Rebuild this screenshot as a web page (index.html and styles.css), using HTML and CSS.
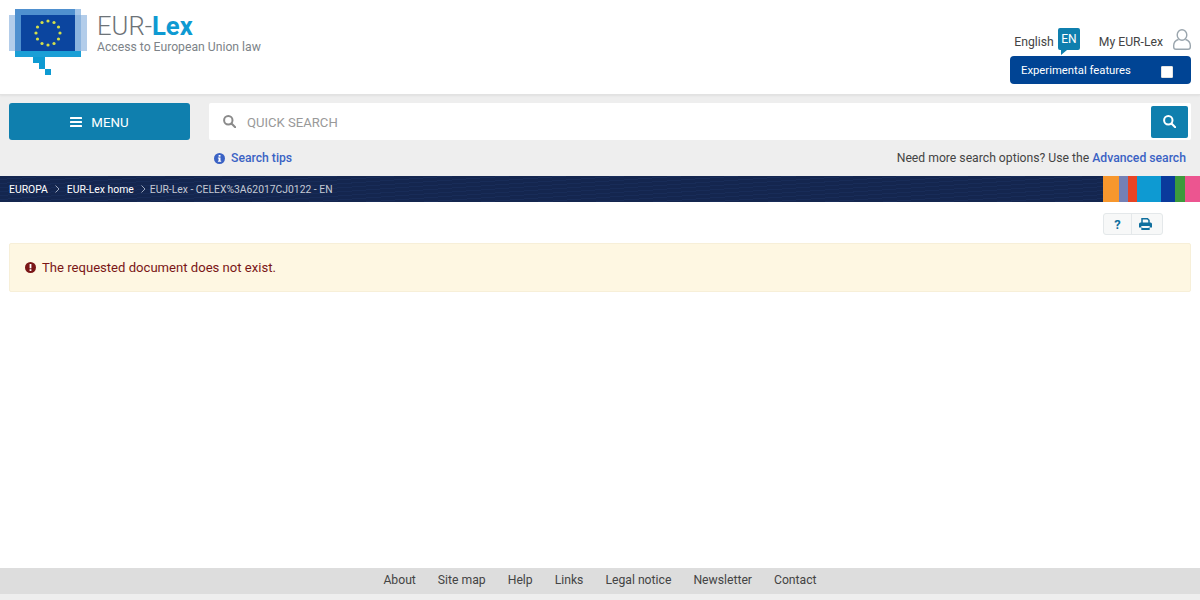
FILE: index.html
```html
<!DOCTYPE html>
<html lang="en">
<head>
<meta charset="utf-8">
<title>EUR-Lex</title>
<link rel="stylesheet" href="styles.css">
</head>
<body>
<div class="page">
  <header class="header">
    <div class="brand">
      <svg class="logo" width="78" height="66" viewBox="0 0 78 66">
        <rect x="0" y="6" width="78" height="36" fill="#b3cdea"/>
        <rect x="66" y="0" width="6" height="42" fill="#a5c6e8"/>
        <rect x="6" y="0" width="60" height="6" fill="#4f90cf"/>
        <rect x="6" y="6" width="6" height="36" fill="#4f90cf"/>
        <rect x="66" y="6" width="6" height="36" fill="#8cb4de"/>
        <rect x="12" y="6" width="54" height="36" fill="#0b459f"/>
        <rect x="6" y="42" width="66" height="6" fill="#1a9fd6"/>
        <rect x="24" y="48" width="12" height="6" fill="#0e9ad2"/>
        <rect x="30" y="54" width="6" height="6" fill="#0e9ad2"/>
        <rect x="36" y="60" width="6" height="6" fill="#0e9ad2"/>
        <g fill="#d4e04a">
          <circle cx="39" cy="12" r="1.600"/><circle cx="45" cy="13.500" r="1.600"/><circle cx="49.500" cy="18" r="1.600"/>
          <circle cx="51" cy="24" r="1.600"/><circle cx="49.500" cy="30" r="1.600"/><circle cx="45" cy="34.500" r="1.600"/>
          <circle cx="39" cy="36" r="1.600"/><circle cx="33" cy="34.500" r="1.600"/><circle cx="28.500" cy="30" r="1.600"/>
          <circle cx="27" cy="24" r="1.600"/><circle cx="28.500" cy="18" r="1.600"/><circle cx="33" cy="13.500" r="1.600"/>
        </g>
      </svg>
      <div class="brand-text">
        <div class="brand-name">EUR-<b>Lex</b></div>
        <div class="brand-tag">Access to European Union law</div>
      </div>
    </div>
    <div class="tools">
      <div class="tools-row">
        <span class="tool-label">English</span>
        <svg class="lang" width="22" height="27" viewBox="0 0 22 27">
          <path d="M2 0h18a2 2 0 0 1 2 2v18a2 2 0 0 1-2 2H9l-6 5v-5H2a2 2 0 0 1-2-2V2a2 2 0 0 1 2-2z" fill="#0f7fae"/>
          <text x="11" y="14.500" text-anchor="middle" class="lang-text">EN</text>
        </svg>
        <span class="tool-label my">My EUR-Lex</span>
        <svg class="user" width="18" height="21" viewBox="0 0 18 21" fill="none" stroke="#9aa5ad" stroke-width="1.400">
          <ellipse cx="9" cy="6" rx="4.800" ry="5.200"/>
          <path d="M5.500 10.500C2.500 11.500.7 13.500.7 16.500v1.500a2.300 2.300 0 0 0 2.300 2.300h12a2.300 2.300 0 0 0 2.300-2.300v-1.500c0-3-1.800-5-4.800-6"/>
        </svg>
      </div>
      <div class="experimental">
        <span>Experimental features</span>
        <span class="checkbox"></span>
      </div>
    </div>
  </header>

  <section class="searchband">
    <div class="search-row">
      <button class="menu-btn">
        <svg width="12" height="10" viewBox="0 0 12 10" fill="#fff"><rect width="12" height="2" rx=".5"/><rect y="4" width="12" height="2" rx=".5"/><rect y="8" width="12" height="2" rx=".5"/></svg>
        <span>MENU</span>
      </button>
      <div class="search-box">
        <svg class="search-ico" width="13" height="13" viewBox="0 0 13 13" fill="none" stroke="#8a8a8a" stroke-width="2"><circle cx="5.300" cy="5.300" r="4.200"/><path d="M8.500 8.500l3.700 3.700" stroke-linecap="round"/></svg>
        <span class="placeholder">QUICK SEARCH</span>
        <button class="search-btn">
          <svg width="13" height="13" viewBox="0 0 13 13" fill="none" stroke="#fff" stroke-width="2"><circle cx="5.300" cy="5.300" r="4.200"/><path d="M8.500 8.500l3.700 3.700" stroke-linecap="round"/></svg>
        </button>
      </div>
    </div>
    <div class="links-row">
      <a class="tips">
        <svg width="11" height="11" viewBox="0 0 11 11"><circle cx="5.500" cy="5.500" r="5.500" fill="#3a62c4"/><rect x="4.600" y="2" width="1.900" height="1.700" fill="#fff"/><path d="M3.900 4.500h2.600v3.200h.7v1H3.900v-1h.7V5.500h-.7z" fill="#fff"/></svg>
        Search tips
      </a>
      <span class="more">Need more search options? Use the <a>Advanced search</a></span>
    </div>
  </section>

  <nav class="crumbs">
    <div class="crumb-list">
      <a>EUROPA</a>
      <svg class="sep" width="5" height="8" viewBox="0 0 5 8" fill="none" stroke="#9aa5bb"><path d="M.5.500l3.500 3.500-3.500 3.500"/></svg>
      <a>EUR-Lex home</a>
      <svg class="sep sep-last" width="5" height="8" viewBox="0 0 5 8" fill="none" stroke="#9aa5bb"><path d="M.5.500l3.500 3.500-3.500 3.500"/></svg>
      <span class="current">EUR-Lex - CELEX%3A62017CJ0122 - EN</span>
    </div>
    <div class="stripes">
      <i class="s1"></i><i class="s2"></i><i class="s3"></i><i class="s4"></i><i class="s5"></i><i class="s6"></i><i class="s7"></i>
    </div>
  </nav>

  <main class="main">
    <div class="actions">
      <div class="action-group">
        <span class="action q">?</span>
        <span class="action p">
          <svg width="13" height="12" viewBox="0 0 13 12"><path d="M3 5V.8h5.500L10 2.300V5" fill="none" stroke="#0f6f9e" stroke-width="1.500"/><path d="M1.500 4.500h10A1.500 1.500 0 0 1 13 6v3.500h-2.300V8H2.300v1.500H0V6a1.500 1.500 0 0 1 1.500-1.500z" fill="#0f6f9e"/><path d="M3 9h7v3H3z" fill="none"/><path d="M2.300 9.500h8.400v2.500H2.300z" fill="#0f6f9e"/><path d="M3.300 8.800h6.400v1.200H3.300z" fill="#f7f8f8"/></svg>
        </span>
      </div>
    </div>
    <div class="alert">
      <svg width="11" height="11" viewBox="0 0 11 11"><circle cx="5.500" cy="5.500" r="5.500" fill="#7a1616"/><rect x="4.600" y="2" width="1.800" height="4.300" fill="#fff"/><rect x="4.600" y="7.200" width="1.800" height="1.800" fill="#fff"/></svg>
      <span>The requested document does not exist.</span>
    </div>
  </main>

  <footer class="footer">
    <a>About</a><a>Site map</a><a>Help</a><a>Links</a><a>Legal notice</a><a>Newsletter</a><a>Contact</a>
  </footer>
  <div class="footer-tail"></div>
</div>
</body>
</html>
```
FILE: styles.css
```css
* { box-sizing: border-box; }
html, body { margin: 0; padding: 0; }
body { font-family: Roboto, "Liberation Sans", sans-serif; color: #333; background: #fff; }
.page { width: 1200px; height: 600px; display: flex; flex-direction: column; overflow: hidden; }

.header { height: 95px; padding: 9px 9px 0; display: flex; justify-content: space-between; border-bottom: 1px solid #e2e2e2; box-shadow: 0 1px 2px rgba(0,0,0,.06); position: relative; }
.brand { display: flex; gap: 10px; align-items: flex-start; }
.logo { display: block; }
.brand-text { padding-top: 4px; }
.brand-name { font-size: 25.600px; line-height: 27px; font-weight: 300; color: #6d7378; }
.brand-name b { font-weight: 700; color: #0e9ad2; }
.brand-tag { font-size: 12.200px; line-height: 14px; color: #7d8388; }

.tools { width: 181px; padding-top: 19px; display: flex; flex-direction: column; }
.tools-row { display: flex; justify-content: flex-end; align-items: flex-start; height: 28px; }
.tool-label { font-size: 12.200px; line-height: 15px; margin-top: 7px; color: #444; }
.lang { margin-left: 4px; display: block; }
.lang-text { font: 400 12px Roboto, sans-serif; fill: #fff; }
.my { margin-left: 19px; }
.user { margin-left: 10px; margin-top: 1px; display: block; }
.experimental { height: 28px; background: #004494; border-radius: 4px; color: #fff; font-size: 11.300px; display: flex; align-items: center; justify-content: space-between; padding: 0 18px 0 11px; }
.checkbox { width: 12px; height: 12px; background: #fff; border: 1px solid #e4e4e4; border-radius: 1px; margin-top: 3px; }

.searchband { height: 81px; background: #eeeeee; padding: 8px 9px 0; }
.search-row { display: flex; gap: 19px; }
.menu-btn { width: 181px; height: 37px; border: 0; border-radius: 3px; background: #0f7fae; color: #fff; font: 400 13.300px Roboto, sans-serif; display: flex; align-items: center; justify-content: center; gap: 9px; padding: 1px 0 0; }
.search-box { flex: 1; height: 37px; background: #fff; display: flex; align-items: center; padding: 0 3px 0 14px; border-radius: 2px; }
.placeholder { flex: 1; margin: 1px 0 0 11px; font-size: 13.100px; color: #999; }
.search-btn { width: 37px; height: 32px; border: 0; background: #0f7fae; border-radius: 2px; display: flex; align-items: center; justify-content: center; padding: 0; }
.links-row { display: flex; justify-content: space-between; align-items: center; padding: 10px 5px 0 205px; font-size: 12.200px; line-height: 16px; }
.tips { display: flex; align-items: center; gap: 6px; color: #3a62c4; font-weight: 500; }
.more { color: #444; }
.more a { color: #3a62c4; font-weight: 500; }

.crumbs { height: 26px; background: #14264f repeating-linear-gradient(176deg, #14264f 0, #14264f 3px, #182c58 3px, #182c58 4px); display: flex; justify-content: space-between; align-items: stretch; padding-left: 9px; font-size: 10.400px; color: #fff; }
.crumb-list { display: flex; align-items: center; }
.sep { margin: 0 7px; display: block; }
.sep-last { margin-right: 4px; }
.current { color: #c5cad4; font-size: 10.350px; }
.stripes { display: flex; }
.stripes i { display: block; height: 100%; }
.s1 { width: 16px; background: #f7972d; }
.s2 { width: 9px; background: #7480b5; }
.s3 { width: 9px; background: #e84424; }
.s4 { width: 24px; background: #0e9ad2; }
.s5 { width: 14px; background: #0a3a9c; }
.s6 { width: 10px; background: #3c9a3c; }
.s7 { width: 15px; background: #ec5590; }

.main { flex: 1; padding: 11px 9px 0; }
.actions { display: flex; justify-content: flex-end; padding-right: 28px; }
.action-group { display: flex; height: 22px; border: 1px solid #e4e8ea; border-radius: 3px; background: #f7f8f8; }
.action { width: 30px; display: flex; align-items: center; justify-content: center; }
.action.p { padding-right: 3px; }
.action.q { width: 28px; border-right: 1px solid #e4e8ea; color: #0f6f9e; font-weight: 700; font-size: 13px; }
.alert { margin-top: 8px; height: 49px; background: #fef7e2; border: 1px solid #f7efd8; border-radius: 2px; display: flex; align-items: center; gap: 6px; padding: 0 0 1px 15px; color: #7a1616; font-size: 13.100px; }

.footer { height: 26px; background: #dddddd; display: flex; justify-content: center; align-items: center; gap: 22px; padding-bottom: 2px; font-size: 12.200px; color: #444; }
.footer-tail { height: 6px; background: #eeeeee; }
```
